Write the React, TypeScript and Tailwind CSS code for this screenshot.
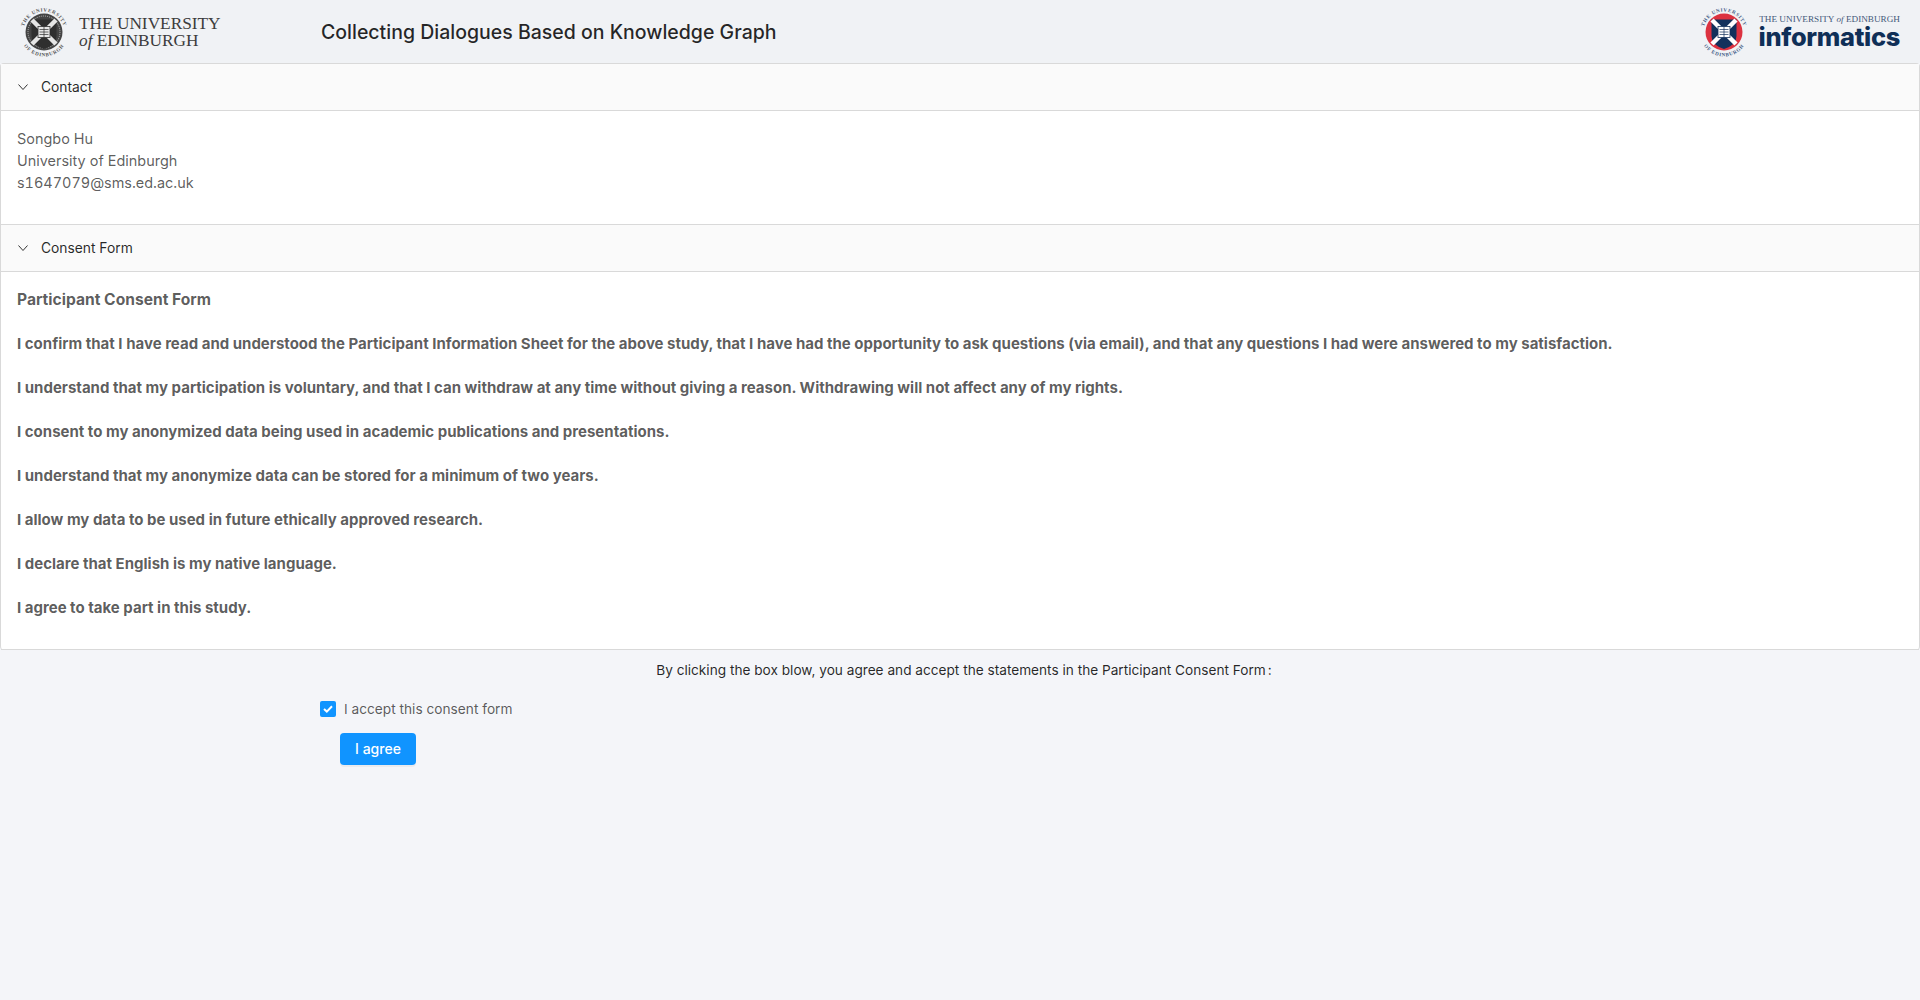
const sans = 'font-["Inter",sans-serif]'

function Crest({ red = false }: { red?: boolean }) {
  const ink = red ? '#12315c' : '#2f2f2f'
  const top = red ? 'crest-top-red' : 'crest-top-grey'
  const bottom = red ? 'crest-bottom-red' : 'crest-bottom-grey'
  const light = red ? '#ffffff' : '#e6e6e6'
  return (
    <svg width="50" height="50" viewBox="0 0 50 50" className="shrink-0">
      <defs>
        <path id={top} d="M4.5 25 a20.5 20.5 0 0 1 41 0" />
        <path id={bottom} d="M0.6 25 a24.4 24.4 0 0 0 48.8 0" />
      </defs>
      <g fontSize="5" fontWeight="700" fill={red ? '#3f5a85' : '#555'} fontFamily="Liberation Serif, serif" textAnchor="middle" letterSpacing="0.7">
        <text>
          <textPath href={`#${top}`} startOffset="50%">THE UNIVERSITY</textPath>
        </text>
        <text>
          <textPath href={`#${bottom}`} startOffset="50%">OF EDINBURGH</textPath>
        </text>
      </g>
      <circle cx="25" cy="25" r="18.5" fill={red ? '#dc3240' : '#444'} />
      {!red && <circle cx="25" cy="25" r="16" fill="none" stroke="#bbb" strokeWidth="1" strokeDasharray="1 1" />}
      <path d="M12.5 12.5 H37.5 V29 Q37.5 38 25 42 Q12.5 38 12.5 29 Z" fill={ink} />
      <path d="M13 13 L37 37 M37 13 L13 37" stroke={light} strokeWidth="4.5" />
      <rect x="19" y="19.5" width="12" height="11" fill={light} stroke={ink} strokeWidth="0.8" />
      <path d="M25 19.5 V30.5 M20.5 22.5 H29.5 M20.5 25 H29.5 M20.5 27.5 H29.5" stroke={ink} strokeWidth="0.7" />
    </svg>
  )
}

function Chevron() {
  return (
    <svg width="12" height="12" viewBox="0 0 12 12" fill="none" className="shrink-0">
      <path d="M1.5 3.5 L6 8.5 L10.5 3.5" stroke="#333" strokeWidth="1" />
    </svg>
  )
}

function PanelHeader({ children }: { children: React.ReactNode }) {
  return (
    <div className="flex h-[47px] items-center gap-[12px] border-b border-[#d9d9d9] bg-[#fafafa] pl-[16px] text-[13.8px] text-[rgba(0,0,0,0.85)]">
      <Chevron />
      <span>{children}</span>
    </div>
  )
}

const statements = [
  'I confirm that I have read and understood the Participant Information Sheet for the above study, that I have had the opportunity to ask questions (via email), and that any questions I had were answered to my satisfaction.',
  'I understand that my participation is voluntary, and that I can withdraw at any time without giving a reason. Withdrawing will not affect any of my rights.',
  'I consent to my anonymized data being used in academic publications and presentations.',
  'I understand that my anonymize data can be stored for a minimum of two years.',
  'I allow my data to be used in future ethically approved research.',
  'I declare that English is my native language.',
  'I agree to take part in this study.',
]

export default function App() {
  return (
    <div className={`${sans} min-h-[1000px] bg-[#f4f5f9] text-[14px] leading-[22px] text-[rgba(0,0,0,0.65)]`}>
      <header className="flex h-[63px] items-center justify-between bg-[#f0f2f5] pl-[19px] pr-[20px]">
        <div className="flex items-center">
          <Crest />
          <div className='ml-[10px] w-[242px] font-["Liberation_Serif",serif] text-[17.3px] leading-[17px] text-[#3c3c3c]'>
            <div>THE UNIVERSITY</div>
            <div>
              <i>of</i> EDINBURGH
            </div>
          </div>
          <h1 className="text-[19.5px] font-medium text-[rgba(0,0,0,0.85)]">Collecting Dialogues Based on Knowledge Graph</h1>
        </div>
        <div className="flex items-center">
          <Crest red />
          <div className="ml-[10px]">
            <div className='text-right font-["Liberation_Serif",serif] text-[9.2px] leading-[11px] text-[#45597a]'>
              THE UNIVERSITY <i>of</i> EDINBURGH
            </div>
            <div className="text-[25.4px] leading-[24px] font-extrabold tracking-[-0.3px] text-[#0f2f57]">informatics</div>
          </div>
        </div>
      </header>

      <div className="rounded-[4px] border border-b-0 border-[#d9d9d9] bg-white">
        <PanelHeader>Contact</PanelHeader>
        <div className="h-[114px] border-b border-[#d9d9d9] px-[16px] pt-[17px] text-[14.45px]">
          <div>Songbo Hu</div>
          <div>University of Edinburgh</div>
          <div className="tabular-nums">s1647079@sms.ed.ac.uk</div>
        </div>
        <PanelHeader>Consent Form</PanelHeader>
        <div className="flex h-[378px] flex-col gap-[22px] border-b border-[#d9d9d9] px-[16px] pt-[17px] text-[15px] font-bold">
          <p className="text-[15.6px]">Participant Consent Form</p>
          {statements.map(s => (
            <p key={s}>{s}</p>
          ))}
        </div>
      </div>

      <p className="mt-[9px] ml-[8px] text-center text-[13.65px] text-[rgba(0,0,0,0.85)]">
        By clicking the box blow, you agree and accept the statements in the Participant Consent Form<span className="ml-[2px]">:</span>
      </p>

      <div className="mt-[17px] ml-[320px] flex items-center">
        <span className="flex h-4 w-4 items-center justify-center rounded-[2px] bg-[#1094ff]">
          <svg width="10" height="8" viewBox="0 0 10 8" fill="none">
            <path d="M1 4 L3.8 6.6 L9 1.2" stroke="#fff" strokeWidth="2" />
          </svg>
        </span>
        <span className="ml-[8px] text-[13.7px]">I accept this consent form</span>
      </div>

      <button className="mt-[13px] ml-[340px] block h-[32px] w-[76px] rounded-[4px] bg-[#1094ff] text-[14px] font-medium text-white shadow-[0_2px_0_rgba(0,0,0,0.045)]">
        I agree
      </button>
    </div>
  )
}
